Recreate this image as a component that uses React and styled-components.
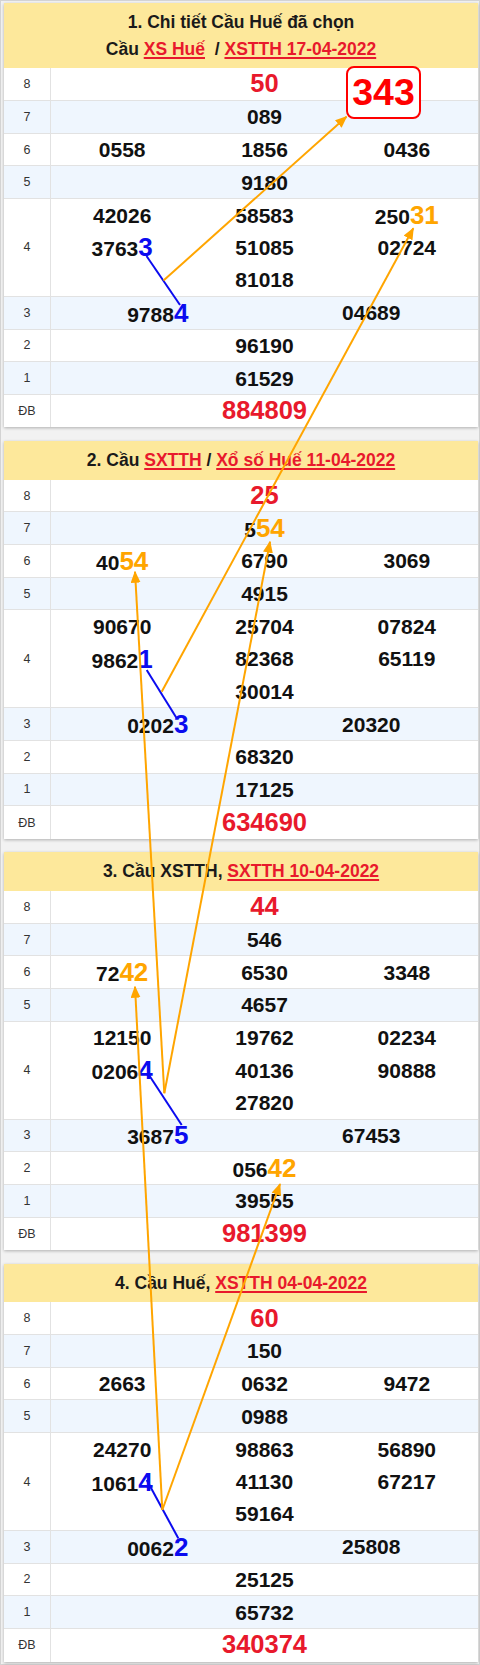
import React from "react";
import styled, { createGlobalStyle } from "styled-components";

const UNIT = 32.65;

const GlobalStyle = createGlobalStyle`
  html, body {
    margin: 0;
    padding: 0;
  }
  body {
    background: #f2f2f2;
    font-family: "Liberation Sans", Arial, sans-serif;
  }
`;

const Page = styled.div`
  position: relative;
  width: 480px;
  min-height: 1665px;
  box-sizing: border-box;
  padding: 3px 2px 0 4px;
  box-shadow: inset 0 0 0 1px #d3d3d3;
  display: flex;
  flex-direction: column;
  gap: 13.6px;
`;

const Board = styled.section`
  background: #fff;
  box-shadow: 0 1px 3px rgba(0, 0, 0, 0.28);
`;

const Head = styled.header`
  background: #fde89b;
  text-align: center;
  font-weight: bold;
  font-size: 17.5px;
  line-height: 26.7px;
  padding: 6px 8px;
  color: #1a1a1a;
`;

const HeadLine = styled.div`
  white-space: nowrap;
`;

const Link = styled.a`
  color: #e8192c;
  text-decoration: underline;
  text-decoration-thickness: 1.5px;
  text-underline-offset: 2px;
`;

const Row = styled.div`
  display: grid;
  grid-template-columns: 47px 1fr;
  box-sizing: border-box;
  height: ${(p) => p.$lines * UNIT}px;
  background: ${(p) => (p.$alt ? "#eff6fe" : "#fff")};
  border-bottom: 1px solid #e2e2e2;

  &:last-child {
    border-bottom: 0;
  }
`;

const Label = styled.div`
  display: flex;
  align-items: center;
  justify-content: center;
  border-right: 1px solid #e2e2e2;
  font-size: 12.5px;
  color: #333;
`;

const Cells = styled.div`
  position: relative;
  display: grid;
  grid-template-columns: repeat(${(p) => p.$cols}, 1fr);
  grid-template-rows: repeat(${(p) => p.$lines}, 1fr);
  align-items: center;
  justify-items: center;
`;

const Num = styled.span`
  font-weight: bold;
  line-height: 1;
  font-size: ${(p) => (p.$big ? "25.5px" : "21px")};
  color: ${(p) => (p.$big ? "#e8192c" : "#111")};
`;

const Mark = styled.span`
  font-size: 26px;
  color: ${(p) => (p.$tone === "blue" ? "#0b0bef" : "#ffa500")};
`;

const Badge = styled.div`
  position: absolute;
  left: 295px;
  top: -2.3px;
  width: 75px;
  height: 53px;
  box-sizing: border-box;
  border: 2px solid #f00;
  border-radius: 8px;
  background: #fff;
  display: flex;
  align-items: center;
  justify-content: center;
  font-weight: bold;
  font-size: 37.5px;
  color: #f00;
`;

const Overlay = styled.svg`
  position: absolute;
  top: 0;
  left: 0;
  pointer-events: none;
  overflow: visible;
`;

const n = (text, mark, tone) => ({ text, mark, tone });

const prizeRows = (d) => [
  { label: "8", nums: [d.p8], big: true, badge: d.badge },
  { label: "7", nums: [d.p7] },
  { label: "6", cols: 3, nums: d.p6 },
  { label: "5", nums: [d.p5] },
  { label: "4", cols: 3, nums: d.p4 },
  { label: "3", cols: 2, nums: d.p3 },
  { label: "2", nums: [d.p2] },
  { label: "1", nums: [d.p1] },
  { label: "ĐB", nums: [d.db], big: true },
];

const boards = [
  {
    title: [
      ["1. Chi tiết Cầu Huế đã chọn"],
      ["Cầu ", { link: "XS Huế" }, "\u00a0 / ", { link: "XSTTH 17-04-2022" }],
    ],
    rows: prizeRows({
      p8: "50",
      badge: "343",
      p7: "089",
      p6: ["0558", "1856", "0436"],
      p5: "9180",
      p4: ["42026", "58583", n("250", "31", "orange"), n("3763", "3", "blue"), "51085", "02724", null, "81018"],
      p3: [n("9788", "4", "blue"), "04689"],
      p2: "96190",
      p1: "61529",
      db: "884809",
    }),
  },
  {
    title: [["2. Cầu ", { link: "SXTTH" }, " / ", { link: "Xổ số Huế 11-04-2022" }]],
    rows: prizeRows({
      p8: "25",
      p7: n("5", "54", "orange"),
      p6: [n("40", "54", "orange"), "6790", "3069"],
      p5: "4915",
      p4: ["90670", "25704", "07824", n("9862", "1", "blue"), "82368", "65119", null, "30014"],
      p3: [n("0202", "3", "blue"), "20320"],
      p2: "68320",
      p1: "17125",
      db: "634690",
    }),
  },
  {
    title: [["3. Cầu XSTTH, ", { link: "SXTTH 10-04-2022" }]],
    rows: prizeRows({
      p8: "44",
      p7: "546",
      p6: [n("72", "42", "orange"), "6530", "3348"],
      p5: "4657",
      p4: ["12150", "19762", "02234", n("0206", "4", "blue"), "40136", "90888", null, "27820"],
      p3: [n("3687", "5", "blue"), "67453"],
      p2: n("056", "42", "orange"),
      p1: "39555",
      db: "981399",
    }),
  },
  {
    title: [["4. Cầu Huế, ", { link: "XSTTH 04-04-2022" }]],
    rows: prizeRows({
      p8: "60",
      p7: "150",
      p6: ["2663", "0632", "9472"],
      p5: "0988",
      p4: ["24270", "98863", "56890", n("1061", "4", "blue"), "41130", "67217", null, "59164"],
      p3: [n("0062", "2", "blue"), "25808"],
      p2: "25125",
      p1: "65732",
      db: "340374",
    }),
  },
];

// cầu lines, page coordinates
const bridges = [
  [146.5, 256, 180, 305],
  [146.7, 670, 176.7, 718.3],
  [148.3, 1074, 181.7, 1125],
  [146.7, 1480, 178.3, 1538.3],
];

const arrows = [
  [163.5, 280.5, 346.5, 116.7],
  [161.7, 691.7, 413.3, 228.3],
  [164.3, 1093.3, 135, 571.7],
  [164.3, 1093.3, 270, 541.7],
  [162.3, 1510, 135, 986.7],
  [162.3, 1510, 280, 1184],
];

const renderNum = (v, big, i) => {
  if (v === null) return <span key={i} />;
  if (typeof v === "string")
    return (
      <Num key={i} $big={big}>
        {v}
      </Num>
    );
  return (
    <Num key={i} $big={big}>
      {v.text}
      <Mark $tone={v.tone}>{v.mark}</Mark>
    </Num>
  );
};

const App = () => {
	return (
		<>
			<GlobalStyle />
			<Page>
				{boards.map((board, b) => (
					<Board key={b}>
						<Head>
							{board.title.map((line, l) => (
								<HeadLine key={l}>
									{line.map((part, p) =>
										typeof part === "string" ? part : <Link key={p}>{part.link}</Link>
									)}
								</HeadLine>
							))}
						</Head>
						{board.rows.map((row, r) => {
							const cols = row.cols || 1;
							const lines = Math.ceil(row.nums.length / cols);
							return (
								<Row key={r} $lines={lines} $alt={r % 2 === 1}>
									<Label>{row.label}</Label>
									<Cells $cols={cols} $lines={lines}>
										{row.nums.map((v, i) => renderNum(v, row.big, i))}
										{row.badge && <Badge>{row.badge}</Badge>}
									</Cells>
								</Row>
							);
						})}
					</Board>
				))}

				<Overlay width="480" height="1665" viewBox="0 0 480 1665">
					<defs>
						<marker id="head" viewBox="0 0 12 10" refX="11" refY="5" markerWidth="12" markerHeight="10"
						        markerUnits="userSpaceOnUse" orient="auto">
							<path d="M0 0 L12 5 L0 10 z" fill="#ffa500"/>
						</marker>
					</defs>
					{bridges.map(([x1, y1, x2, y2], i) => (
						<line key={"b" + i} x1={x1} y1={y1} x2={x2} y2={y2} stroke="#0b0bef" strokeWidth="2"/>
					))}
					{arrows.map(([x1, y1, x2, y2], i) => (
						<line key={"a" + i} x1={x1} y1={y1} x2={x2} y2={y2} stroke="#ffa500" strokeWidth="2"
						      markerEnd="url(#head)"/>
					))}
				</Overlay>
			</Page>
		</>
	)
}

export default App;
